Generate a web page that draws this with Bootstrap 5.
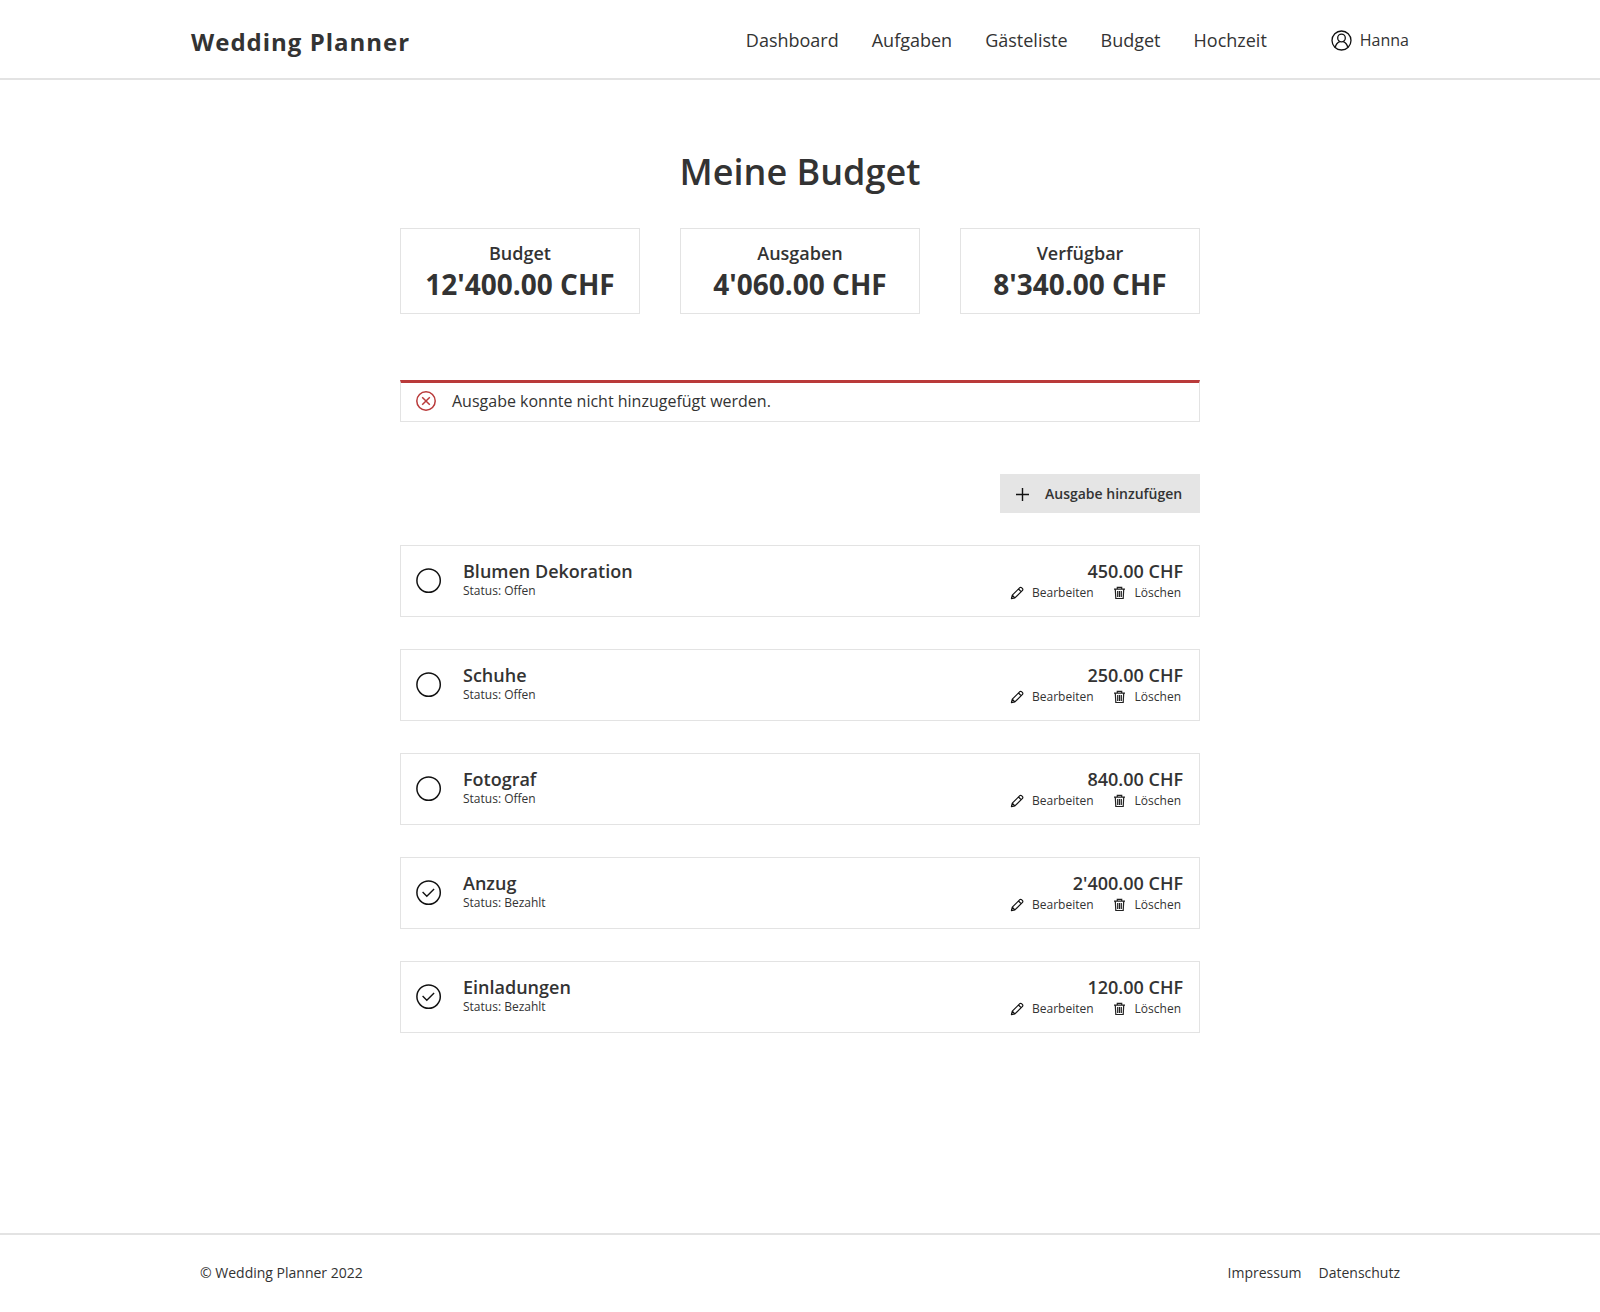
<!DOCTYPE html>
<html lang="de">
<head>
<meta charset="utf-8">
<meta name="viewport" content="width=device-width, initial-scale=1">
<title>Wedding Planner – Budget</title>
<link rel="stylesheet" href="https://cdn.jsdelivr.net/npm/bootstrap@5.3.0/dist/css/bootstrap.min.css">
<style>
  :root { --ink: #333; --line: #e3e3e3; --danger: #b93a3a; }
  body { font-family: "Open Sans", "Noto Sans", sans-serif; color: var(--ink); background: #fff; }
  a { color: var(--ink); text-decoration: none; }
  .site-width { max-width: 1218px; }
  .content-width { max-width: 800px; }
  .site-header { border-bottom: 2px solid var(--line); min-height: 80px; padding-top: 2px; }
  .brand { font-size: 24px; line-height: 32px; font-weight: 700; letter-spacing: 1px; padding-top: 4px; }
  .main-links { gap: 33px; font-size: 18px; line-height: 24px; }
  .account { gap: 8px; margin-left: 64px; font-size: 16px; line-height: 24px; }
  .page-title { font-size: 36px; line-height: 48px; font-weight: 600; margin: 68px 0 32px; }
  .summary { gap: 40px; margin-bottom: 66px; }
  .panel { border: 1px solid var(--line); }
  .summary-box { padding: 12px 8px 10px; }
  .summary-label { font-size: 18px; line-height: 24px; font-weight: 600; margin: 0; }
  .summary-sum { font-size: 28px; line-height: 38px; font-weight: 700; margin: 0; }
  .notice { border-top: 3px solid var(--danger); gap: 16px; padding: 6px 15px 8px; margin-bottom: 52px; font-size: 16px; line-height: 24px; }
  .btn-add { background: #e5e5e5; color: var(--ink); width: 200px; padding: 10px 16px 9px; gap: 16px; border: 0; border-radius: 0; font-size: 14px; line-height: 20px; font-weight: 600; }
  .btn-add:hover { background: #d8d8d8; }
  .expenses { gap: 32px; margin: 32px 0 48px; }
  .expense { min-height: 72px; padding: 13px 16px 13px 15px; }
  .paid-toggle { appearance: none; width: 26px; height: 26px; margin: 0 21px 0 0; background: center / 26px no-repeat url("data:image/svg+xml,%3Csvg xmlns='http://www.w3.org/2000/svg' viewBox='0 0 26 26' fill='none' stroke='%23111' stroke-width='1.5'%3E%3Ccircle cx='12.6' cy='12.6' r='11.7'/%3E%3C/svg%3E"); }
  .paid-toggle:checked { background-image: url("data:image/svg+xml,%3Csvg xmlns='http://www.w3.org/2000/svg' viewBox='0 0 26 26' fill='none' stroke='%23111' stroke-width='1.5'%3E%3Ccircle cx='12.6' cy='12.6' r='11.7'/%3E%3Cpath d='M6.6 12.1l4.2 4.1 7.3-7.3' stroke-width='1.4'/%3E%3C/svg%3E"); }
  .expense-name { font-size: 18px; line-height: 24px; font-weight: 600; }
  .expense-status { font-size: 12px; line-height: 16px; }
  .expense-actions { gap: 19px; padding-right: 2px; }
  .btn-line { display: flex; align-items: center; gap: 8px; border: 0; padding: 0; background: none; color: var(--ink); font-size: 12px; line-height: 20px; }
  .site-footer { border-top: 2px solid var(--line); font-size: 14px; line-height: 20px; }
  .footer-row { max-width: 1200px; padding: 28px 0 29px; }
  .footer-links { gap: 17px; }
</style>
<script src="https://cdn.jsdelivr.net/npm/bootstrap@5.3.0/dist/js/bootstrap.bundle.min.js"></script>
</head>
<body class="d-flex flex-column min-vh-100">

<svg class="d-none" xmlns="http://www.w3.org/2000/svg">
  <symbol id="i-pen" viewBox="0 0 14 14"><path d="M1.4 12.7l.9-3.5L9.8 1.7a1.2 1.2 0 0 1 1.7 0l1 1a1.2 1.2 0 0 1 0 1.7L4.9 11.9zM8.5 3l2.8 2.8M2.3 9.2l2.6 2.7" fill="none" stroke="#111" stroke-width="1.2" stroke-linejoin="round"/></symbol>
  <symbol id="i-bin" viewBox="0 0 14 14"><path d="M1 3.2h11M4.3 3V1.4h4.4V3M2.3 3.4l.5 9.1h7.4l.5-9.1M4.7 5v6M6.5 5v6M8.3 5v6" fill="none" stroke="#222" stroke-width="1.2"/></symbol>
</svg>

<header class="site-header d-flex align-items-center">
  <nav class="site-width container-fluid p-0 d-flex flex-wrap align-items-center" aria-label="Hauptnavigation">
    <a class="brand me-auto" href="#">Wedding Planner</a>
    <div class="main-links d-flex flex-wrap">
      <a href="#">Dashboard</a>
      <a href="#">Aufgaben</a>
      <a href="#">Gästeliste</a>
      <a href="#">Budget</a>
      <a href="#">Hochzeit</a>
    </div>
    <a class="account d-flex align-items-center" href="#">
      <svg width="21" height="21" viewBox="0 0 21 21" fill="none" stroke="#111" stroke-width="1.3" aria-hidden="true"><circle cx="10.5" cy="10.5" r="9.5"/><circle cx="10.5" cy="8" r="3.8"/><path d="M4.2 17.4c.8-3.2 2.6-5 4.5-5.8M16.8 17.4c-.8-3.2-2.6-5-4.5-5.8"/></svg>
      <span>Hanna</span>
    </a>
  </nav>
</header>

<main class="content-width container-fluid p-0 flex-grow-1">
  <h1 class="page-title text-center">Meine Budget</h1>

  <section class="summary d-flex text-center" aria-label="Übersicht">
    <div class="panel summary-box flex-fill w-100"><h2 class="summary-label">Budget</h2><p class="summary-sum">12'400.00 CHF</p></div>
    <div class="panel summary-box flex-fill w-100"><h2 class="summary-label">Ausgaben</h2><p class="summary-sum">4'060.00 CHF</p></div>
    <div class="panel summary-box flex-fill w-100"><h2 class="summary-label">Verfügbar</h2><p class="summary-sum">8'340.00 CHF</p></div>
  </section>

  <div class="panel notice d-flex align-items-center" role="alert">
    <svg width="20" height="20" viewBox="0 0 20 20" fill="none" stroke="#b93a3a" stroke-width="1.5" aria-hidden="true"><circle cx="10" cy="10" r="9.2"/><path d="M6.2 6.2l7.6 7.6M13.8 6.2l-7.6 7.6"/></svg>
    <span>Ausgabe konnte nicht hinzugefügt werden.</span>
  </div>

  <div class="d-flex justify-content-end">
    <button type="button" class="btn btn-add d-flex align-items-center">
      <svg width="13" height="13" viewBox="0 0 13 13" fill="none" stroke="#111" stroke-width="1.4" aria-hidden="true"><path d="M0 6.5h13M6.5 0v13"/></svg>
      <span>Ausgabe hinzufügen</span>
    </button>
  </div>

  <ul class="expenses list-unstyled d-flex flex-column">
    <li class="panel expense d-flex align-items-center">
      <input class="paid-toggle flex-shrink-0" type="checkbox" id="paid-1">
      <div class="me-auto align-self-start">
        <label class="expense-name d-block" for="paid-1">Blumen Dekoration</label>
        <div class="expense-status">Status: Offen</div>
      </div>
      <div class="d-flex flex-column align-items-end align-self-start">
        <div class="expense-name">450.00 CHF</div>
        <div class="expense-actions d-flex">
          <button type="button" class="btn-line"><svg width="14" height="14" aria-hidden="true"><use href="#i-pen"/></svg>Bearbeiten</button>
          <button type="button" class="btn-line"><svg width="14" height="14" aria-hidden="true"><use href="#i-bin"/></svg>Löschen</button>
        </div>
      </div>
    </li>
    <li class="panel expense d-flex align-items-center">
      <input class="paid-toggle flex-shrink-0" type="checkbox" id="paid-2">
      <div class="me-auto align-self-start">
        <label class="expense-name d-block" for="paid-2">Schuhe</label>
        <div class="expense-status">Status: Offen</div>
      </div>
      <div class="d-flex flex-column align-items-end align-self-start">
        <div class="expense-name">250.00 CHF</div>
        <div class="expense-actions d-flex">
          <button type="button" class="btn-line"><svg width="14" height="14" aria-hidden="true"><use href="#i-pen"/></svg>Bearbeiten</button>
          <button type="button" class="btn-line"><svg width="14" height="14" aria-hidden="true"><use href="#i-bin"/></svg>Löschen</button>
        </div>
      </div>
    </li>
    <li class="panel expense d-flex align-items-center">
      <input class="paid-toggle flex-shrink-0" type="checkbox" id="paid-3">
      <div class="me-auto align-self-start">
        <label class="expense-name d-block" for="paid-3">Fotograf</label>
        <div class="expense-status">Status: Offen</div>
      </div>
      <div class="d-flex flex-column align-items-end align-self-start">
        <div class="expense-name">840.00 CHF</div>
        <div class="expense-actions d-flex">
          <button type="button" class="btn-line"><svg width="14" height="14" aria-hidden="true"><use href="#i-pen"/></svg>Bearbeiten</button>
          <button type="button" class="btn-line"><svg width="14" height="14" aria-hidden="true"><use href="#i-bin"/></svg>Löschen</button>
        </div>
      </div>
    </li>
    <li class="panel expense d-flex align-items-center">
      <input class="paid-toggle flex-shrink-0" type="checkbox" id="paid-4" checked>
      <div class="me-auto align-self-start">
        <label class="expense-name d-block" for="paid-4">Anzug</label>
        <div class="expense-status">Status: Bezahlt</div>
      </div>
      <div class="d-flex flex-column align-items-end align-self-start">
        <div class="expense-name">2'400.00 CHF</div>
        <div class="expense-actions d-flex">
          <button type="button" class="btn-line"><svg width="14" height="14" aria-hidden="true"><use href="#i-pen"/></svg>Bearbeiten</button>
          <button type="button" class="btn-line"><svg width="14" height="14" aria-hidden="true"><use href="#i-bin"/></svg>Löschen</button>
        </div>
      </div>
    </li>
    <li class="panel expense d-flex align-items-center">
      <input class="paid-toggle flex-shrink-0" type="checkbox" id="paid-5" checked>
      <div class="me-auto align-self-start">
        <label class="expense-name d-block" for="paid-5">Einladungen</label>
        <div class="expense-status">Status: Bezahlt</div>
      </div>
      <div class="d-flex flex-column align-items-end align-self-start">
        <div class="expense-name">120.00 CHF</div>
        <div class="expense-actions d-flex">
          <button type="button" class="btn-line"><svg width="14" height="14" aria-hidden="true"><use href="#i-pen"/></svg>Bearbeiten</button>
          <button type="button" class="btn-line"><svg width="14" height="14" aria-hidden="true"><use href="#i-bin"/></svg>Löschen</button>
        </div>
      </div>
    </li>
  </ul>
</main>

<footer class="site-footer">
  <div class="footer-row container-fluid d-flex justify-content-between">
    <span>© Wedding Planner 2022</span>
    <div class="footer-links d-flex">
      <a href="#">Impressum</a>
      <a href="#">Datenschutz</a>
    </div>
  </div>
</footer>
</body>
</html>
